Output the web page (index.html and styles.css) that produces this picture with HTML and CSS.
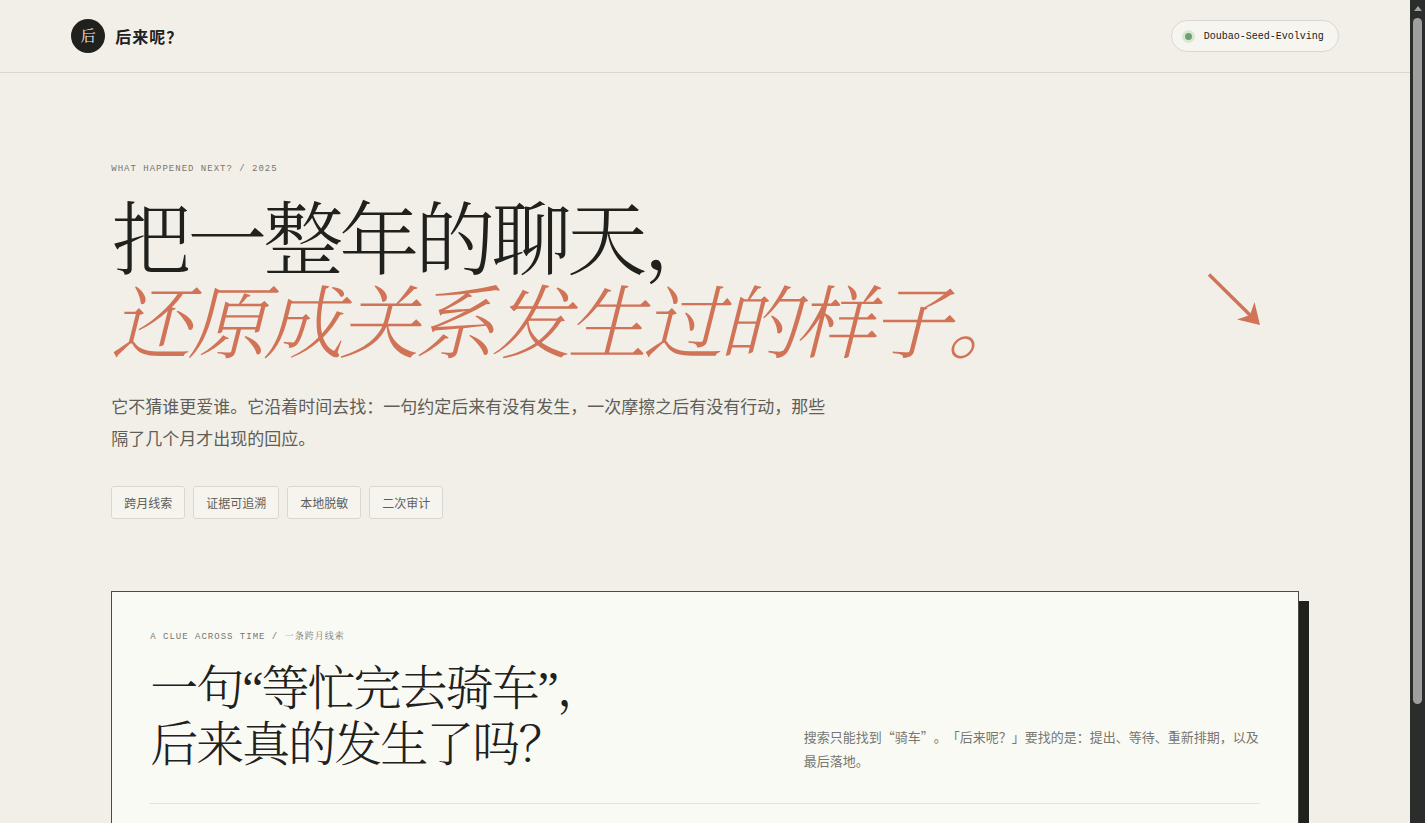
FILE: index.html
```html
<!DOCTYPE html>
<html lang="zh-CN">
<head>
    <meta charset="UTF-8">
    <meta name="viewport" content="width=device-width, initial-scale=1.0">
    <title>后来呢？</title>
    <link rel="stylesheet" href="styles.css">
</head>
<body>
    <div class="page">
        <header class="topbar">
            <a class="brand" href="#">
                <span class="brand_mark">后</span>
                <span class="brand_name">后来呢？</span>
            </a>
            <div class="model">
                <span class="model_dot"></span>
                <span>Doubao-Seed-Evolving</span>
            </div>
        </header>

        <main class="main">
            <section class="hero">
                <p class="eyebrow">WHAT HAPPENED NEXT? / 2025</p>
                <div class="hero_head">
                    <h1 class="hero_title">把一整年的聊天，<br><em>还原成关系发生过的样子。</em></h1>
                    <svg class="hero_arrow" viewBox="0 0 54 54" aria-hidden="true">
                        <path d="M2 2.5 L45 45" stroke="currentColor" stroke-width="3.4" fill="none" />
                        <path d="M53 53 L47.5 30 L43 43 L30 47.5 Z" fill="currentColor" />
                    </svg>
                </div>
                <p class="hero_desc">它不猜谁更爱谁。它沿着时间去找：一句约定后来有没有发生，一次摩擦之后有没有行动，那些隔了几个月才出现的回应。</p>
                <ul class="tags">
                    <li>跨月线索</li>
                    <li>证据可追溯</li>
                    <li>本地脱敏</li>
                    <li>二次审计</li>
                </ul>
            </section>

            <section class="card">
                <div class="card_head">
                    <div>
                        <p class="eyebrow">A CLUE ACROSS TIME / 一条跨月线索</p>
                        <h2 class="card_title">一句“等忙完去骑车”，<br>后来真的发生了吗？</h2>
                    </div>
                    <p class="card_desc">搜索只能找到“骑车”。「后来呢？」要找的是：提出、等待、重新排期，以及最后落地。</p>
                </div>
            </section>
        </main>
    </div>

    <div class="scrollbar" aria-hidden="true">
        <span class="scrollbar_up"></span>
        <span class="scrollbar_thumb"></span>
    </div>
</body>
</html>
```

FILE: styles.css
```css
:root {
    --paper: #f2efe9;
    --card: #fafaf5;
    --ink: #20201c;
    --muted: #5f5e57;
    --soft: #77766f;
    --line: #d9d7d0;
    --accent: #d17357;
    --sans: "Noto Sans CJK SC", sans-serif;
    --serif: "Liberation Serif", "Noto Serif CJK SC", "Noto Sans CJK SC", serif;
    --mono: "Liberation Mono", "Noto Serif CJK SC", "Noto Sans CJK SC", monospace;
}

* {
    box-sizing: border-box;
    margin: 0;
    padding: 0;
}

body {
    display: flex;
    height: 100vh;
    overflow: hidden;
    background: var(--paper);
    color: var(--ink);
    font-family: var(--sans);
}

ul {
    list-style: none;
}

.page {
    flex: 1;
    min-width: 0;
    overflow: hidden;
}

/* header */
.topbar {
    display: flex;
    justify-content: space-between;
    align-items: center;
    padding: 19px 5vw;
    border-bottom: 1px solid var(--line);
}

.brand {
    display: flex;
    align-items: center;
    gap: 10px;
    color: inherit;
    text-decoration: none;
}

.brand_mark {
    display: grid;
    place-items: center;
    width: 34px;
    height: 34px;
    border-radius: 50%;
    background: var(--ink);
    color: var(--paper);
    font-family: var(--serif);
    font-size: 15px;
    line-height: 20px;
}

.brand_name {
    font-size: 16px;
    font-weight: 700;
    letter-spacing: 1px;
}

.model {
    display: flex;
    align-items: center;
    gap: 12px;
    height: 32px;
    padding: 0 14px 0 13px;
    border: 1px solid var(--line);
    border-radius: 16px;
    background: #f6f5f0;
    font-family: var(--mono);
    font-size: 10px;
}

.model_dot {
    width: 7px;
    height: 7px;
    border-radius: 50%;
    background: #6f9f6e;
    box-shadow: 0 0 0 3px #dce6d6;
}

/* hero */
.main {
    padding: 88px calc(5vw + 40px) 0;
}

.eyebrow {
    color: var(--soft);
    font-family: var(--mono);
    font-size: 9px;
    letter-spacing: 1px;
    line-height: 16px;
}

.hero_head {
    display: flex;
    justify-content: space-between;
    align-items: flex-end;
    margin-top: 22px;
    padding-right: 38px;
}

.hero_title {
    font-family: var(--serif);
    font-size: 80px;
    font-weight: 300;
    letter-spacing: -4px;
    line-height: 84px;
}

.hero_title em {
    color: var(--accent);
}

.hero_arrow {
    flex: none;
    width: 54px;
    height: 54px;
    margin-bottom: 41px;
    color: var(--accent);
}

.hero_desc {
    max-width: 720px;
    margin-top: 23px;
    color: var(--muted);
    font-size: 17px;
    line-height: 32px;
}

.tags {
    display: flex;
    gap: 8px;
    margin-top: 32px;
}

.tags li {
    padding: 0 12px;
    border: 1px solid var(--line);
    border-radius: 3px;
    background: #f6f4ef;
    color: var(--muted);
    font-size: 12px;
    line-height: 31px;
}

/* clue card */
.card {
    margin-top: 72px;
    padding: 37px 38px 80px;
    border: 1px solid #4c4b46;
    background: var(--card);
    box-shadow: 10px 10px 0 var(--ink);
}

.card_head {
    display: flex;
    justify-content: space-between;
    align-items: flex-end;
    padding-bottom: 30px;
    border-bottom: 1px solid #e2e1dc;
}

.card_title {
    margin-top: 16px;
    font-family: var(--serif);
    font-size: 48px;
    font-weight: 300;
    letter-spacing: -2px;
    line-height: 56px;
}

.card_desc {
    width: 456px;
    color: var(--soft);
    font-size: 13px;
    line-height: 24px;
    text-spacing-trim: space-all;
}

/* scroll track on the right edge */
.scrollbar {
    display: flex;
    flex-direction: column;
    align-items: center;
    flex: none;
    width: 15px;
    padding-top: 6px;
    background: #2b2c2c;
}

.scrollbar_up {
    border: 4px solid transparent;
    border-top: 0;
    border-bottom: 5px solid #a0a0a0;
}

.scrollbar_thumb {
    width: 9px;
    height: 84%;
    margin-top: 7px;
    border-radius: 5px;
    background: #9f9fa0;
}
```
